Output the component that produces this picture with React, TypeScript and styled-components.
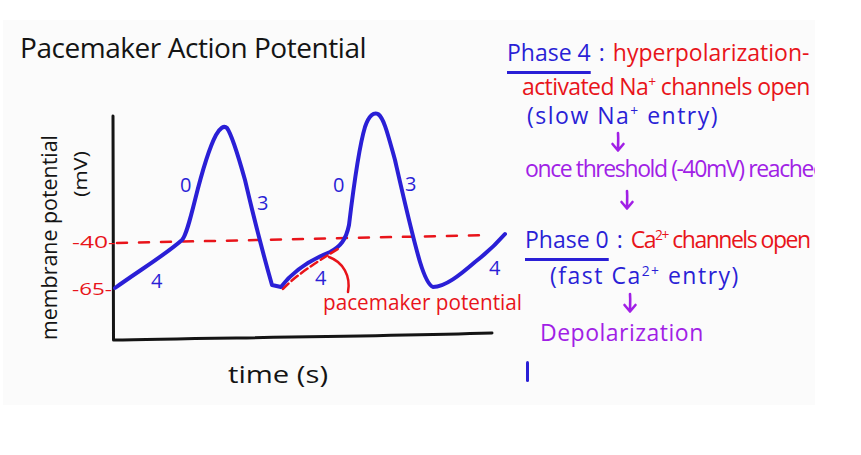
import React from "react";
import styled, { createGlobalStyle } from "styled-components";

const BLUE = "#2a1fd6";
const RED = "#e8141a";
const PURPLE = "#a11fe6";
const INK = "#141414";
const HAND = `"Open Sans", "Noto Sans", "DejaVu Sans", sans-serif`;

const GlobalStyle = createGlobalStyle`
  html, body { margin: 0; padding: 0; background: #ffffff; }
  body { font-family: ${HAND}; }
`;

const Page = styled.div`
  width: 861px;
  height: 455px;
  padding: 20px 0 0 3px;
  box-sizing: border-box;
  background: #ffffff;
`;

const Board = styled.div`
  width: 812px;
  height: 385px;
  background: #fbfbfb;
  overflow: hidden;
  display: grid;
  grid-template-columns: 504px 1fr;
`;

const ChartPanel = styled.div`
  display: flex;
  flex-direction: column;
  min-width: 0;
`;

const Title = styled.h1`
  margin: 0;
  height: 70px;
  padding: 7px 0 0 17px;
  box-sizing: border-box;
  font-family: ${HAND};
  font-weight: 400;
  font-size: 28px;
  letter-spacing: -0.45px;
  line-height: 40px;
  color: ${INK};
  white-space: nowrap;
`;

const ChartSvg = styled.svg`
  display: block;
  overflow: visible;
  font-family: ${HAND};
`;

const Notes = styled.div`
  display: flex;
  flex-direction: column;
  padding-top: 14px;
  min-width: 0;
`;

const Row = styled.div<{ $h: number; $indent: number; $ls?: number }>`
  height: ${(p) => p.$h}px;
  padding-left: ${(p) => p.$indent}px;
  display: flex;
  align-items: center;
  white-space: nowrap;
  font-family: ${HAND};
  font-size: 23px;
  font-weight: 500;
  line-height: 30px;
  letter-spacing: ${(p) => p.$ls ?? 0}px;
`;

const Ink = styled.span<{ $c: string; $ls?: number }>`
  color: ${(p) => p.$c};
  letter-spacing: ${(p) => (p.$ls === undefined ? "inherit" : `${p.$ls}px`)};
`;

const Phase = styled.span`
  color: ${BLUE};
  letter-spacing: 0;
  text-decoration: underline;
  text-decoration-thickness: 3px;
  text-underline-offset: 10px;
`;

const Colon = styled.span`
  color: ${BLUE};
  margin: 0 8px 0 8px;
`;

const Sup = styled.sup`
  font-size: 0.6em;
  vertical-align: 0.55em;
  line-height: 0;
`;

const Cursor = styled.span`
  display: block;
  width: 3px;
  height: 21px;
  border-radius: 2px;
  background: ${BLUE};
`;

const Arrow = () => (
  <svg width="16" height="22" viewBox="0 0 16 22">
    <path
      d="M8 2 C8.5 8 8 13 8 19 M2.5 13 L8 19.5 L13.5 13"
      fill="none"
      stroke={PURPLE}
      strokeWidth="2.6"
      strokeLinecap="round"
      strokeLinejoin="round"
    />
  </svg>
);

const Chart = () => (
  <ChartSvg width="530" height="315" viewBox="3 90 530 315">
    {/* axes */}
    <path d="M113 116 L113.5 340 C200 338 350 337 492 333" fill="none" stroke={INK} strokeWidth="3" strokeLinecap="round" strokeLinejoin="round" />
    {/* threshold */}
    <path d="M117 243 L490 235" fill="none" stroke={RED} strokeWidth="2.5" strokeDasharray="10 12" strokeLinecap="round" />
    {/* membrane potential trace */}
    <path
      d="M115 288 C140 270 165 255 182 240 C186 236 190 220 195 200 C200 180 208 150 216 135 C220 128 224 125 227 128 C232 135 238 155 245 180 C252 210 262 250 272 285 L281 287 C290 275 305 262 330 252 C340 247 346 240 349 225 C352 200 358 150 365 127 C369 115 374 112 378 114 C384 118 388 135 395 160 C403 195 412 235 420 262 C424 275 428 285 433 287 C445 287 460 275 475 262 C488 252 498 242 505 234"
      fill="none"
      stroke={BLUE}
      strokeWidth="4"
      strokeLinecap="round"
      strokeLinejoin="round"
    />
    {/* pacemaker potential overlay */}
    <path d="M283 289 C295 276 315 263 341 247" fill="none" stroke={RED} strokeWidth="2.5" strokeDasharray="8 4" strokeLinecap="round" />
    <path d="M329 257 C343 262 351 276 348 292" fill="none" stroke={RED} strokeWidth="2.5" strokeLinecap="round" />

    {/* labels */}
    <g fill={RED} fontSize="17" fontWeight="500">
      <text x="72" y="248" textLength="44" lengthAdjust="spacingAndGlyphs">-40-</text>
      <text x="72" y="295" textLength="40" lengthAdjust="spacingAndGlyphs">-65-</text>
      <text x="323" y="310" fontSize="21" textLength="199" lengthAdjust="spacingAndGlyphs">pacemaker potential</text>
    </g>
    <g fill={BLUE} fontSize="20" fontWeight="500">
      <text x="180" y="192">0</text>
      <text x="257" y="210">3</text>
      <text x="333" y="192">0</text>
      <text x="405" y="191">3</text>
      <text x="151" y="288">4</text>
      <text x="315" y="285">4</text>
      <text x="489" y="275">4</text>
    </g>
    <g fill={INK} fontWeight="400">
      <text x="228" y="383" fontSize="24" textLength="100" lengthAdjust="spacingAndGlyphs">time (s)</text>
      <text transform="translate(57 340) rotate(-90)" fontSize="22" textLength="205" lengthAdjust="spacingAndGlyphs">membrane potential</text>
      <text transform="translate(87 197) rotate(-90)" fontSize="19" textLength="46" lengthAdjust="spacingAndGlyphs">(mV)</text>
    </g>
  </ChartSvg>
);

export default function App() {
  return (
    <>
      <GlobalStyle />
      <Page>
        <Board>
          <ChartPanel>
            <Title>Pacemaker Action Potential</Title>
            <Chart />
          </ChartPanel>
          <Notes>
            <Row $h={36} $indent={0}>
              <Phase>Phase 4</Phase>
              <Colon>:</Colon>
              <Ink $c={RED}>hyperpolarization-</Ink>
            </Row>
            <Row $h={31.5} $indent={15} $ls={-0.6}>
              <Ink $c={RED}>
                activated Na<Sup>+</Sup> channels open
              </Ink>
            </Row>
            <Row $h={27.5} $indent={20} $ls={1.5}>
              <Ink $c={BLUE}>
                (slow Na<Sup>+</Sup> entry)
              </Ink>
            </Row>
            <Row $h={26} $indent={103}>
              <Arrow />
            </Row>
            <Row $h={26.5} $indent={18} $ls={-1.4}>
              <Ink $c={PURPLE}>once threshold (-40mV) reached</Ink>
            </Row>
            <Row $h={37.5} $indent={112}>
              <Arrow />
            </Row>
            <Row $h={40.5} $indent={18}>
              <Phase>Phase 0</Phase>
              <Colon>:</Colon>
              <Ink $c={RED} $ls={-1.5}>
                Ca<Sup>2+</Sup> channels open
              </Ink>
            </Row>
            <Row $h={30.5} $indent={43} $ls={1.5}>
              <Ink $c={BLUE}>
                (fast Ca<Sup>2+</Sup> entry)
              </Ink>
            </Row>
            <Row $h={26.5} $indent={115}>
              <Arrow />
            </Row>
            <Row $h={31} $indent={33} $ls={0.5}>
              <Ink $c={PURPLE}>Depolarization</Ink>
            </Row>
            <Row $h={47.5} $indent={19}>
              <Cursor />
            </Row>
          </Notes>
        </Board>
      </Page>
    </>
  );
}
